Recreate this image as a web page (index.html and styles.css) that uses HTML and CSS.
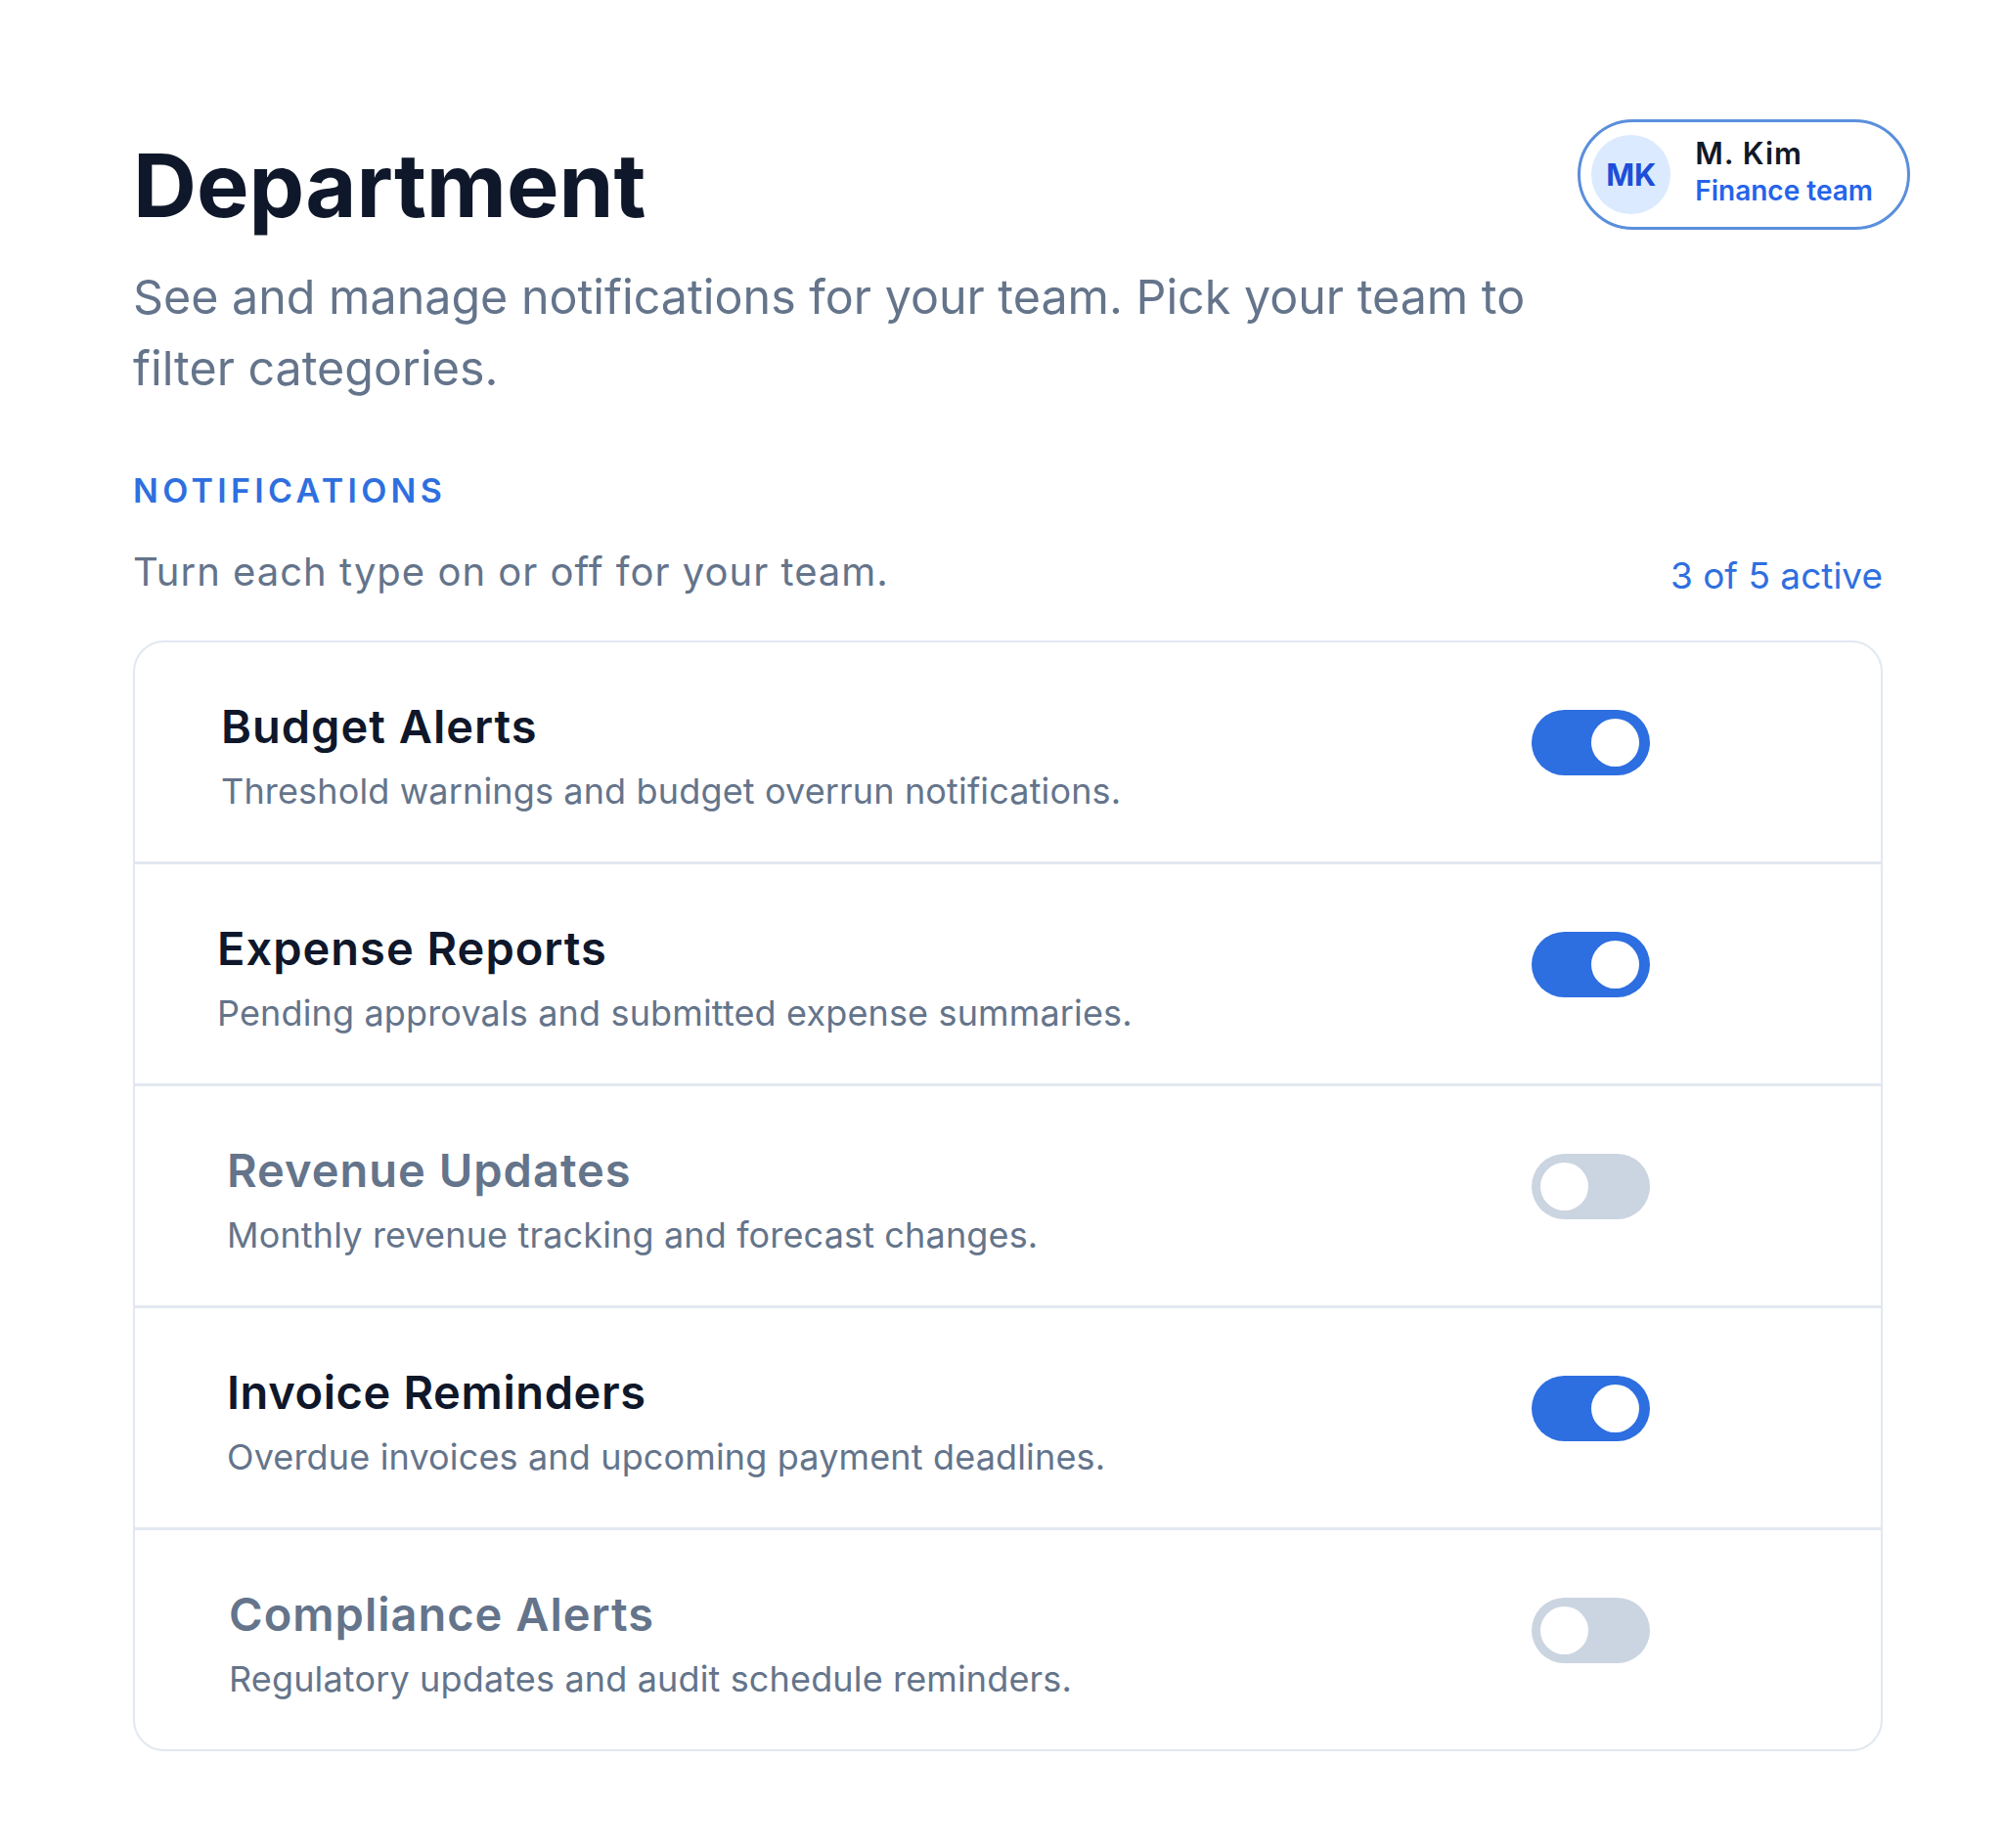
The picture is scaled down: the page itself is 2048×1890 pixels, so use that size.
FILE: index.html
```html
<!DOCTYPE html>
<html lang="en">
<head>
    <meta charset="UTF-8">
    <meta name="viewport" content="width=device-width, initial-scale=1.0">
    <title>Department - Notifications</title>
    <link rel="stylesheet" href="styles.css">
</head>
<body>
    <main class="page">
        <!-- Header -->
        <header class="page-header">
            <h1 class="page-title">Department</h1>
            <div class="user-chip">
                <span class="avatar">MK</span>
                <span class="user-info">
                    <span class="user-name">M. Kim</span>
                    <span class="user-team">Finance team</span>
                </span>
            </div>
        </header>
        <p class="intro">See and manage notifications for your team. Pick your team to filter categories.</p>

        <!-- Notification settings -->
        <section class="notifications">
            <h2 class="section-label">Notifications</h2>
            <div class="section-bar">
                <p class="section-hint">Turn each type on or off for your team.</p>
                <span class="active-count" id="activeCount">3 of 5 active</span>
            </div>

            <ul class="setting-list">
                <li class="setting">
                    <div class="setting-text">
                        <h3 class="setting-title">Budget Alerts</h3>
                        <p class="setting-desc">Threshold warnings and budget overrun notifications.</p>
                    </div>
                    <button class="switch is-on" role="switch" aria-checked="true" aria-label="Budget Alerts"></button>
                </li>
                <li class="setting">
                    <div class="setting-text">
                        <h3 class="setting-title">Expense Reports</h3>
                        <p class="setting-desc">Pending approvals and submitted expense summaries.</p>
                    </div>
                    <button class="switch is-on" role="switch" aria-checked="true" aria-label="Expense Reports"></button>
                </li>
                <li class="setting is-off">
                    <div class="setting-text">
                        <h3 class="setting-title">Revenue Updates</h3>
                        <p class="setting-desc">Monthly revenue tracking and forecast changes.</p>
                    </div>
                    <button class="switch" role="switch" aria-checked="false" aria-label="Revenue Updates"></button>
                </li>
                <li class="setting">
                    <div class="setting-text">
                        <h3 class="setting-title">Invoice Reminders</h3>
                        <p class="setting-desc">Overdue invoices and upcoming payment deadlines.</p>
                    </div>
                    <button class="switch is-on" role="switch" aria-checked="true" aria-label="Invoice Reminders"></button>
                </li>
                <li class="setting is-off">
                    <div class="setting-text">
                        <h3 class="setting-title">Compliance Alerts</h3>
                        <p class="setting-desc">Regulatory updates and audit schedule reminders.</p>
                    </div>
                    <button class="switch" role="switch" aria-checked="false" aria-label="Compliance Alerts"></button>
                </li>
            </ul>
        </section>
    </main>

    <script>
        // Toggle a notification type and refresh the counter
        const switches = document.querySelectorAll('.switch');

        function updateCount() {
            const on = document.querySelectorAll('.switch.is-on').length;
            document.getElementById('activeCount').textContent = on + ' of ' + switches.length + ' active';
        }

        switches.forEach(function(sw) {
            sw.addEventListener('click', function() {
                const on = sw.classList.toggle('is-on');
                sw.setAttribute('aria-checked', on);
                sw.closest('.setting').classList.toggle('is-off', !on);
                updateCount();
            });
        });
    </script>
</body>
</html>
```

FILE: styles.css
```css
/* Reset and base styles */
* {
    box-sizing: border-box;
    margin: 0;
    padding: 0;
}

body {
    font-family: Inter, "Noto Sans", Arial, sans-serif;
    color: #0f172a;
    background: #fff;
}

.page {
    padding: 122px 123px 80px 136px;
}

/* Header */
.page-header {
    display: flex;
    justify-content: space-between;
    align-items: flex-start;
    margin-right: -28px;
}

.page-title {
    margin-top: 18px;
    font-size: 90px;
    line-height: 99px;
    font-weight: 700;
    color: #0f172a;
}

.user-chip {
    display: flex;
    align-items: center;
    gap: 25px;
    height: 113px;
    padding: 0 35px 0 11px;
    border: 3px solid #5a8fdc;
    border-radius: 57px;
    background: #fff;
}

.avatar {
    display: flex;
    align-items: center;
    justify-content: center;
    width: 81px;
    height: 81px;
    border-radius: 50%;
    background: #dbeafe;
    color: #1d4ed8;
    font-size: 31px;
    font-weight: 700;
}

.user-info {
    display: flex;
    flex-direction: column;
    margin-bottom: 5px;
}

.user-name {
    font-size: 31px;
    line-height: 38px;
    font-weight: 600;
    letter-spacing: 1px;
    color: #111827;
}

.user-team {
    font-size: 28px;
    line-height: 38px;
    font-weight: 600;
    color: #2563eb;
}

.intro {
    max-width: 1450px;
    margin-top: 28px;
    font-size: 48.4px;
    line-height: 73px;
    color: #64748b;
}

/* Section heading */
.section-label {
    margin-top: 68px;
    font-size: 34px;
    line-height: 41px;
    font-weight: 600;
    letter-spacing: 0.127em;
    text-transform: uppercase;
    color: #2f6fdf;
}

.section-bar {
    display: flex;
    justify-content: space-between;
    align-items: flex-end;
    margin-top: 36px;
}

.section-hint {
    font-size: 40px;
    line-height: 53px;
    letter-spacing: 1px;
    color: #64748b;
}

.active-count {
    font-size: 37px;
    line-height: 44px;
    color: #2f6fdf;
}

/* Settings card */
.setting-list {
    list-style: none;
    margin-top: 44px;
    border: 2px solid #e2e8f0;
    border-radius: 32px;
    overflow: hidden;
}

.setting {
    display: flex;
    align-items: flex-start;
    height: 224px;
    padding: 58px 236px 0 88px;
}

.setting + .setting {
    border-top: 3px solid #e2e8f0;
    height: 227px;
}

.setting:nth-child(2) { padding-left: 84px; }
.setting:nth-child(3),
.setting:nth-child(4) { padding-left: 94px; }
.setting:nth-child(5) { padding-left: 96px; }

.setting-text {
    flex: 1;
}

.setting-title {
    font-size: 47px;
    line-height: 56px;
    font-weight: 600;
    letter-spacing: 1px;
    color: #0f172a;
}

.setting:nth-child(4) .setting-title {
    letter-spacing: 0.6px;
}

.setting.is-off .setting-title {
    color: #64748b;
}

.setting-desc {
    margin-top: 12px;
    font-size: 36px;
    line-height: 52px;
    letter-spacing: 0.15px;
    color: #64748b;
}

/* Toggle switch */
.switch {
    position: relative;
    flex: none;
    width: 121px;
    height: 67px;
    margin-top: 11px;
    border: none;
    border-radius: 34px;
    background: #cbd5e1;
    cursor: pointer;
}

.switch::after {
    content: "";
    position: absolute;
    top: 9px;
    left: 9px;
    width: 49px;
    height: 49px;
    border-radius: 50%;
    background: #fff;
}

.switch.is-on {
    background: #2d6ee0;
}

.switch.is-on::after {
    left: 61px;
}
```
